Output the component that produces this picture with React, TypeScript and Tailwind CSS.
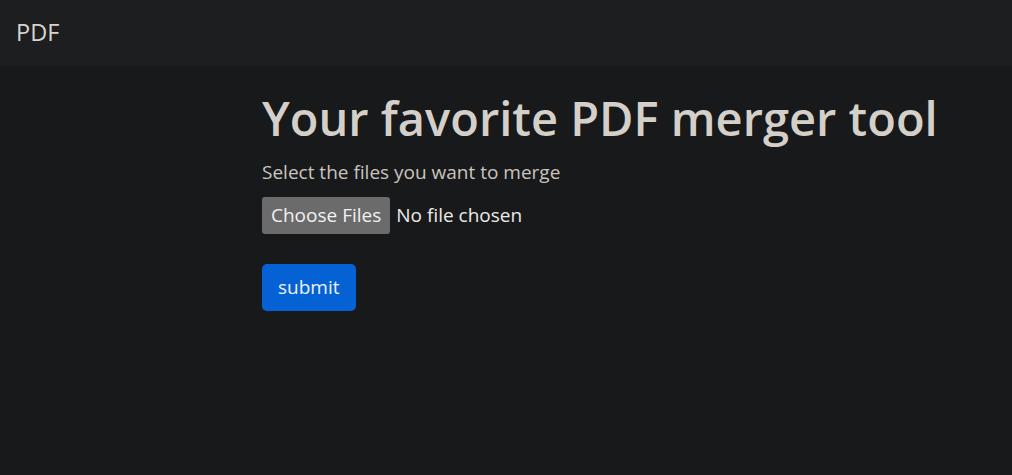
export default function App() {
  return (
    <div className="min-h-[475px] bg-[#18191b] font-['Open_Sans',sans-serif] text-[#d4d0c9]">
      <nav className="flex h-[66px] items-center bg-[#1c1e20] px-4">
        <span className="text-[23.5px] leading-none text-[#d8d4cd]">PDF</span>
      </nav>
      <main className="pl-[262px] pt-[24px]">
        <h1 className="text-[47px] font-semibold leading-[56px] text-[#d4d0c9]">Your favorite PDF merger tool</h1>
        <p className="mt-[12px] text-[19px] leading-[28px] text-[#c9c5be]">Select the files you want to merge</p>
        <div className="mt-[11px] flex items-center">
          <span className="flex h-[37px] items-center rounded-[3px] bg-[#6b6b6b] px-[9px] text-[19px] text-[#f2f2f2]">Choose Files</span>
          <span className="ml-[6px] text-[19px] text-[#ecebe8]">No file chosen</span>
        </div>
        <button className="mt-[30px] flex h-[47px] items-center rounded-[5px] bg-[#0562d4] px-[16px] text-[19px] text-[#eef2f8]">submit</button>
      </main>
    </div>
  );
}
